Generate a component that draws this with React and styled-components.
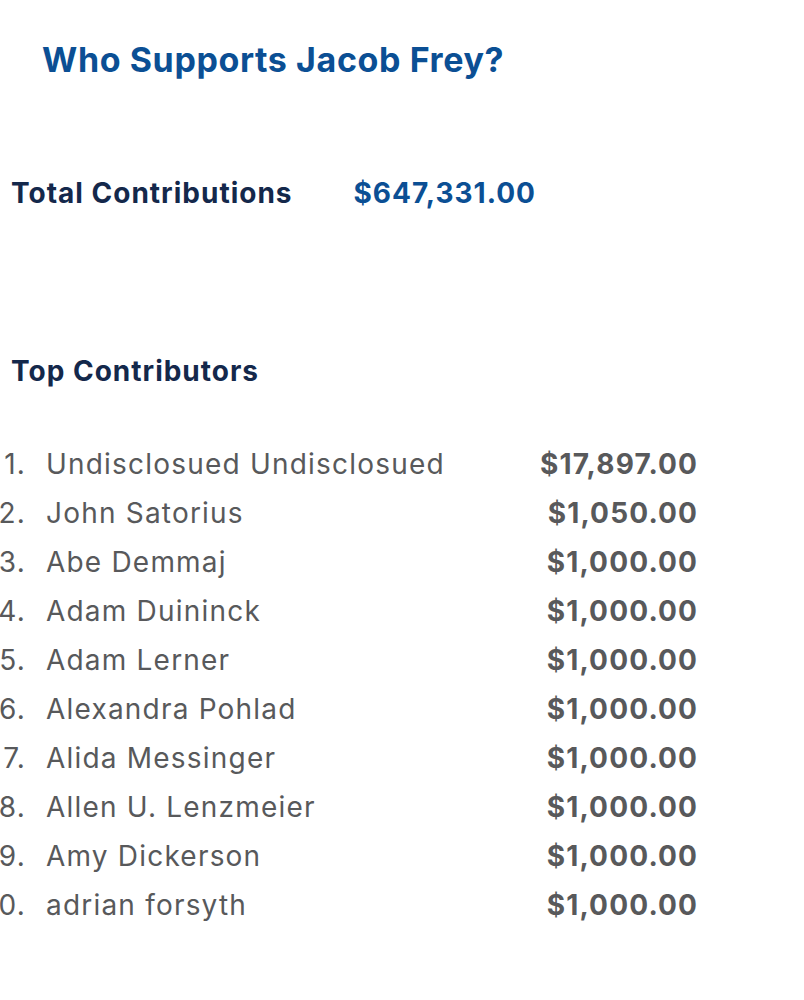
import styled, { createGlobalStyle } from "styled-components";

const GlobalStyle = createGlobalStyle`
  html, body {
    margin: 0;
    padding: 0;
    background: #ffffff;
  }
  body {
    font-family: Inter, "Liberation Sans", sans-serif;
  }
`;

const contributors = [
  { name: "Undisclosued Undisclosued", amount: "$17,897.00" },
  { name: "John Satorius", amount: "$1,050.00" },
  { name: "Abe Demmaj", amount: "$1,000.00" },
  { name: "Adam Duininck", amount: "$1,000.00" },
  { name: "Adam Lerner", amount: "$1,000.00" },
  { name: "Alexandra Pohlad", amount: "$1,000.00" },
  { name: "Alida Messinger", amount: "$1,000.00" },
  { name: "Allen U. Lenzmeier", amount: "$1,000.00" },
  { name: "Amy Dickerson", amount: "$1,000.00" },
  { name: "adrian forsyth", amount: "$1,000.00" },
];

export default function App() {
  return (
    <Page>
      <GlobalStyle />
      <Title>Who Supports Jacob Frey?</Title>
      <TotalRow>
        <SectionLabel>Total Contributions</SectionLabel>
        <TotalAmount>$647,331.00</TotalAmount>
      </TotalRow>
      <TopHeading>Top Contributors</TopHeading>
      <List>
        {contributors.map((c, i) => (
          <Row key={i}>
            <Rank>
              <span>{i + 1}.</span>
            </Rank>
            <Name>{c.name}</Name>
            <Amount>{c.amount}</Amount>
          </Row>
        ))}
      </List>
    </Page>
  );
}

const Page = styled.div`
  padding-top: 39px;
  width: 804px;
`;

const Title = styled.h1`
  margin: 0 0 0 42px;
  font-size: 34px;
  line-height: 41px;
  font-weight: 700;
  letter-spacing: 0.6px;
  color: #0b4f94;
`;

const TotalRow = styled.div`
  display: flex;
  align-items: baseline;
  gap: 61px;
  margin: 96px 0 0 11px;
`;

const SectionLabel = styled.h2`
  margin: 0;
  font-size: 28px;
  line-height: 34px;
  font-weight: 700;
  letter-spacing: 1px;
  color: #14284b;
`;

const TotalAmount = styled.span`
  font-size: 28px;
  line-height: 34px;
  font-weight: 700;
  letter-spacing: 1px;
  color: #0b4f94;
`;

const TopHeading = styled(SectionLabel)`
  margin: 144px 0 0 11px;
`;

const List = styled.ol`
  list-style: none;
  margin: 52px 0 0 0;
  padding: 0;
  width: 697px;
`;

const Row = styled.li`
  display: grid;
  grid-template-columns: 26px 1fr auto;
  column-gap: 20px;
  align-items: baseline;
  height: 49px;
  line-height: 49px;
  font-size: 28px;
  letter-spacing: 1.2px;
  color: #58595b;
`;

const Rank = styled.span`
  display: flex;
  justify-content: flex-end;
  white-space: nowrap;
`;

const Name = styled.span`
  white-space: nowrap;
`;

const Amount = styled.span`
  font-weight: 700;
  letter-spacing: 1.15px;
  margin-right: -1.15px;
`;
